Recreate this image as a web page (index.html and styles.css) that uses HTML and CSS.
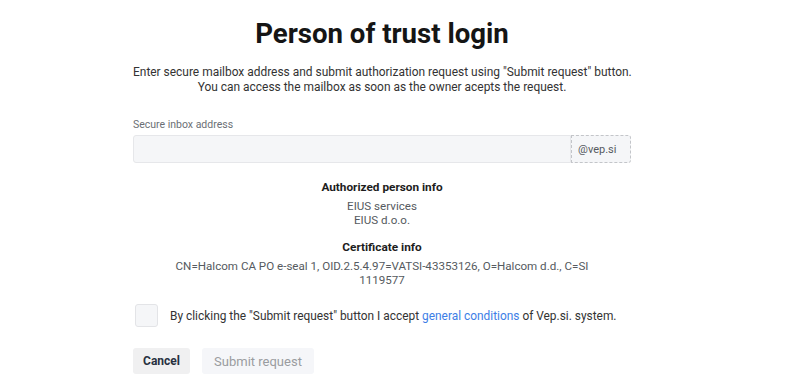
FILE: index.html
```html
<!DOCTYPE html>
<html lang="en">
<head>
<meta charset="utf-8">
<title>Person of trust login</title>
<link rel="stylesheet" href="styles.css">
</head>
<body>
<main class="page">
  <h1 class="title">Person of trust login</h1>
  <p class="intro">Enter secure mailbox address and submit authorization request using "Submit request" button.<br>You can access the mailbox as soon as the owner acepts the request.</p>

  <label class="field-label" for="inbox">Secure inbox address</label>
  <div class="input-group">
    <input id="inbox" class="input" type="text">
    <span class="addon">@vep.si</span>
  </div>

  <section class="info">
    <h2 class="info-title">Authorized person info</h2>
    <p class="info-text">EIUS services<br>EIUS d.o.o.</p>
  </section>

  <section class="info">
    <h2 class="info-title">Certificate info</h2>
    <p class="info-text">CN=Halcom CA PO e-seal 1, OID.2.5.4.97=VATSI-43353126, O=Halcom d.d., C=SI<br>1119577</p>
  </section>

  <div class="terms">
    <span class="checkbox"></span>
    <span class="terms-text">By clicking the "Submit request" button I accept <a class="link" href="#">general conditions</a> of Vep.si. system.</span>
  </div>

  <div class="actions">
    <button class="btn btn-cancel" type="button">Cancel</button>
    <button class="btn btn-submit" type="button">Submit request</button>
  </div>
</main>
</body>
</html>
```

FILE: styles.css
```css
* { box-sizing: border-box; }
html, body { margin: 0; padding: 0; background: #ffffff; }
body {
  font-family: Roboto, "Liberation Sans", Arial, sans-serif;
  color: #2b2b2b;
}
.page {
  width: 498px;
  margin-left: 133px;
  padding-top: 17px;
  display: flex;
  flex-direction: column;
}
.title {
  margin: 0;
  text-align: center;
  font-size: 27.6px;
  font-weight: 700;
  line-height: 34px;
  color: #151515;
}
.intro {
  margin: 14px 0 0;
  text-align: center;
  font-size: 11.95px;
  line-height: 15px;
  color: #333333;
  white-space: nowrap;
}
.field-label {
  margin-top: 23px;
  font-size: 10.5px;
  line-height: 14px;
  color: #6b6f75;
}
.input-group {
  margin-top: 3px;
  display: flex;
  height: 28px;
}
.input {
  flex: 1;
  min-width: 0;
  height: 28px;
  margin: 0;
  border: 1px solid #e6e7ea;
  border-radius: 3px 0 0 3px;
  background: #f5f6f8;
  outline: none;
  font: inherit;
}
.addon {
  width: 60px;
  display: flex;
  align-items: center;
  padding-left: 6px;
  border: 1px dashed #c3c5c9;
  border-radius: 0 3px 3px 0;
  background: #f5f6f8;
  font-size: 11px;
  color: #555a60;
}
.info {
  margin-top: 17px;
  text-align: center;
}
.info + .info { margin-top: 13px; }
.info-title {
  margin: 0;
  font-size: 11.8px;
  line-height: 15px;
  font-weight: 700;
  color: #1d1d1d;
}
.info-text {
  margin: 4px 0 0;
  font-size: 11.6px;
  line-height: 14px;
  color: #555a60;
}
.terms {
  margin-top: 17px;
  display: flex;
  align-items: center;
  gap: 12px;
  padding-left: 2px;
}
.checkbox {
  flex: none;
  width: 23px;
  height: 23px;
  border: 1px solid #e3e4e7;
  border-radius: 3px;
  background: #f5f6f8;
}
.terms-text {
  font-size: 11.9px;
  color: #333333;
  white-space: nowrap;
}
.link {
  color: #3d7ee6;
  text-decoration: none;
}
.actions {
  margin-top: 21px;
  display: flex;
  gap: 12px;
}
.btn {
  height: 26px;
  border: none;
  border-radius: 3px;
  font-family: inherit;
  padding: 0;
  cursor: pointer;
}
.btn-cancel {
  width: 57px;
  background: #f0f0f1;
  color: #283140;
  font-size: 12px;
  font-weight: 700;
}
.btn-submit {
  width: 112px;
  background: #f5f6f9;
  color: #9a9ca0;
  font-size: 13px;
}
```
